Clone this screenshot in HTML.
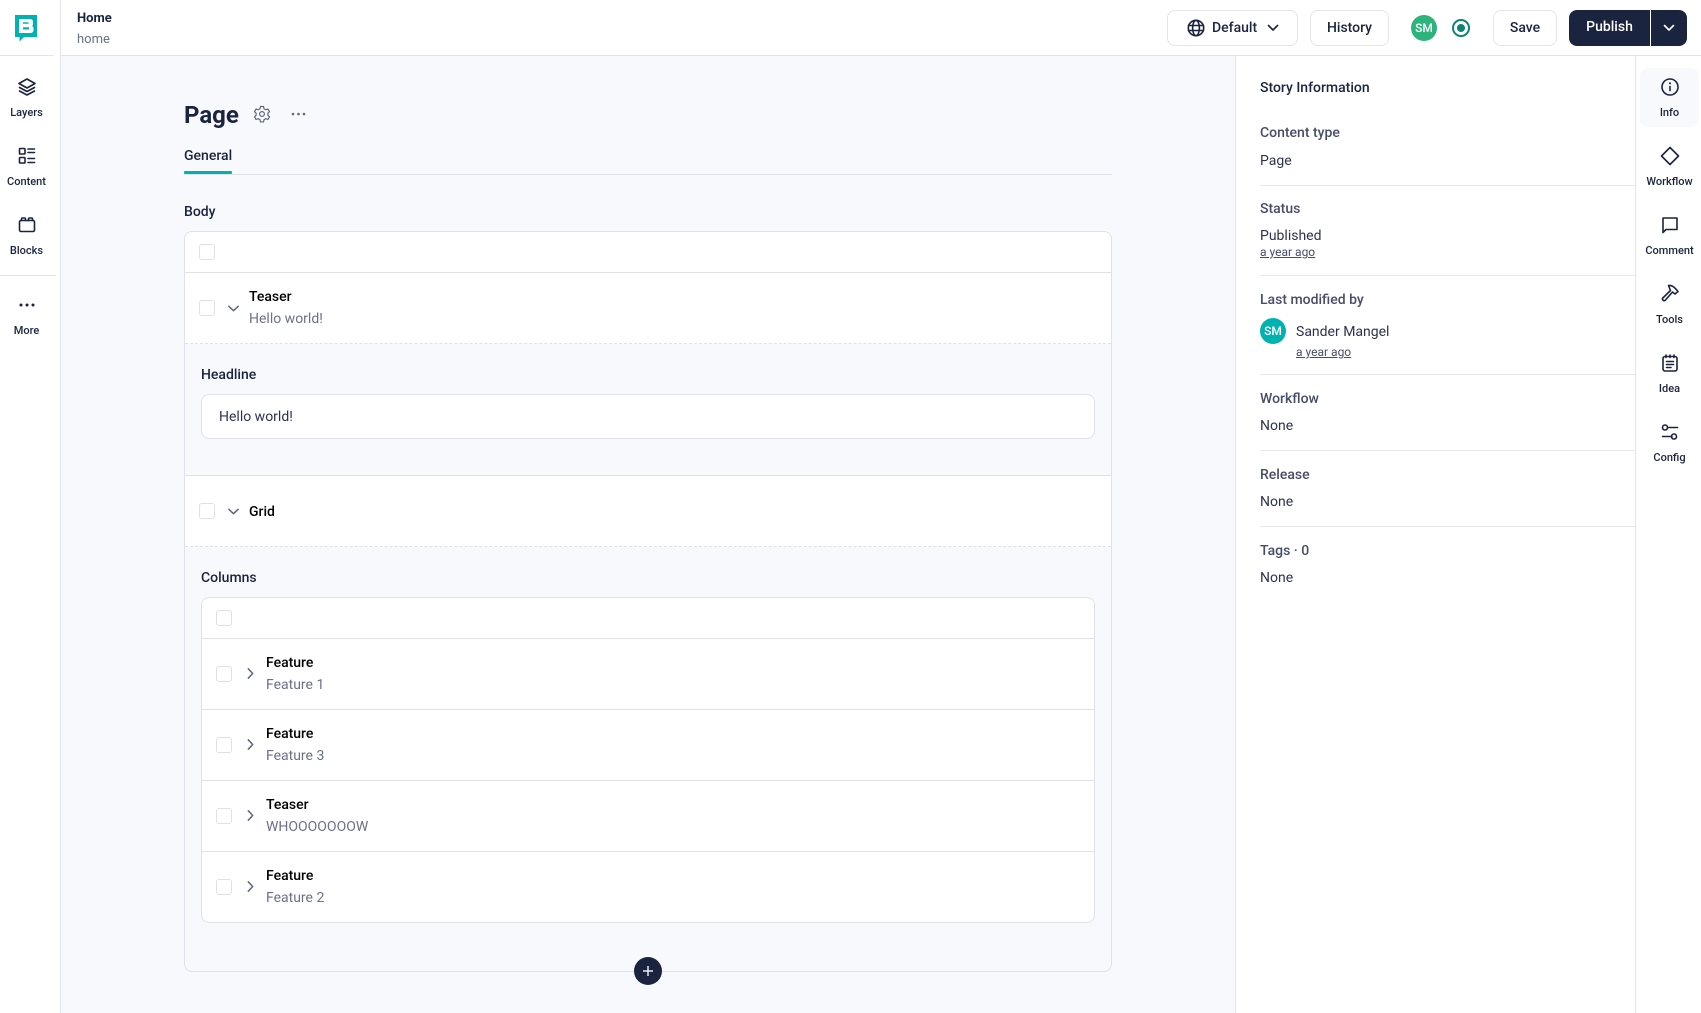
<!DOCTYPE html>
<html lang="en"><head><meta charset="utf-8"><title>Home</title>
<style>
*{box-sizing:border-box}
html,body{margin:0;padding:0;width:1701px;height:1013px;overflow:hidden;background:#fff}
body{font-family:"Roboto","Liberation Sans",sans-serif;color:#1b243f;font-size:14px;position:relative}
.a,.t,svg.i{position:absolute}
.t{line-height:20px;height:20px;white-space:nowrap;margin-top:1px}
.m{font-weight:500}
.lab{font-size:11px;width:66px;text-align:center;color:#1b243f;font-weight:500}
.mut{color:#6a7188}
.sec{color:#454d69;font-weight:500}
.line{position:absolute;background:#e5e7ef;height:1px}
.cb{position:absolute;width:16px;height:16px;border:1px solid #dfe1ea;border-radius:3px;background:#fff}
.btn{position:absolute;top:10px;height:36px;border:1px solid #e3e5ed;border-radius:8px;background:#fff;text-align:center;line-height:34px;font-weight:500}
.u{font-size:12px;text-decoration:underline;color:#454d69;margin-top:0}
svg.i{fill:none;stroke:#1b243f;stroke-width:1.6;stroke-linecap:round;stroke-linejoin:round}
svg.c{stroke:#5f667e;stroke-width:1.5}
.title{color:#000;font-weight:500}
</style></head><body>
<!-- canvas -->
<div class="a" style="left:60px;top:56px;width:1175px;height:957px;background:#f8f9fc"></div>
<!-- structure lines -->
<div class="a" style="left:60px;top:0;width:1px;height:1013px;background:#e3e5ee"></div>
<div class="a" style="left:60px;top:55px;width:1641px;height:1px;background:#e3e5ee"></div>
<div class="a" style="left:0;top:55px;width:54px;height:1px;background:#e3e5ee"></div>
<div class="a" style="left:0;top:275px;width:56px;height:1px;background:#e3e5ee"></div>
<div class="a" style="left:1235px;top:56px;width:1px;height:957px;background:#e3e5ee"></div>
<div class="a" style="left:1635px;top:56px;width:1px;height:957px;background:#e3e5ee"></div>
<!-- logo -->
<svg class="a" style="left:15px;top:15px" width="22" height="27" viewBox="0 0 22 27"><path d="M0 0H22V22H9L4.500 26.500V22H0Z" fill="#00b3b0"/><path fill-rule="evenodd" d="M4 4H15Q18 4 18 7V9Q18 10.500 17 11Q18.500 11.800 18.500 13.500V15Q18.500 18 15 18H4ZM8 7.200V8.800H13.500V7.200ZM8 12.200V14.500H14V12.200Z" fill="#fff"/></svg>
<!-- left rail -->
<svg class="i" style="left:17px;top:77px" width="20" height="20" viewBox="0 0 20 20"><path d="M10 2 18 6.500 10 11 2 6.500Z"/><path d="M2.500 10.500 10 14.500 17.500 10.500"/><path d="M2.500 14 10 18 17.500 14"/></svg>
<div class="t lab" style="left:-6.500px;top:102px">Layers</div>
<svg class="i" style="left:18px;top:147px" width="18" height="18" viewBox="0 0 18 18"><rect x="1.500" y="1.500" width="5.500" height="5.500" rx=".8"/><rect x="1.500" y="10.500" width="5.500" height="5.500" rx=".8"/><path d="M10 2H16.500M10 5.500H16.500M10 11.500H16.500M10 15.500H16.500"/></svg>
<div class="t lab" style="left:-6.500px;top:171px">Content</div>
<svg class="i" style="left:18px;top:216px" width="18" height="18" viewBox="0 0 18 18"><rect x="1.500" y="4.500" width="15" height="11" rx="1.500"/><path d="M3.500 4.500V3Q3.500 2 4.500 2H6.500Q7.500 2 7.500 3V4.500M10.500 4.500V3Q10.500 2 11.500 2H13.500Q14.500 2 14.500 3V4.500"/></svg>
<div class="t lab" style="left:-6.500px;top:240px">Blocks</div>
<svg class="a" style="left:19px;top:303px" width="16" height="4"><circle cx="2" cy="2" r="1.500" fill="#1b243f"/><circle cx="8" cy="2" r="1.500" fill="#1b243f"/><circle cx="14" cy="2" r="1.500" fill="#1b243f"/></svg>
<div class="t lab" style="left:-6.500px;top:320px">More</div>
<!-- top -->
<div class="t" style="left:77px;top:8px;font-size:13px;font-weight:bold">Home</div>
<div class="t mut" style="left:77px;top:29px;font-size:13px">home</div>
<div class="btn" style="left:1167px;width:131px"></div>
<svg class="i" style="left:1187px;top:19px" width="18" height="18" viewBox="0 0 18 18" stroke-width="1.300"><circle cx="9" cy="9" r="7.700"/><ellipse cx="9" cy="9" rx="3.400" ry="7.700"/><path d="M1.500 6.500H16.500M1.500 11.500H16.500"/></svg>
<div class="t m" style="left:1212px;top:17px">Default</div>
<svg class="i" style="left:1267px;top:22px" width="12" height="12" viewBox="0 0 12 12"><path d="M1.500 3.500 6 8 10.500 3.500"/></svg>
<div class="btn" style="left:1310px;width:79px;color:#1b243f">History</div>
<div class="a" style="left:1411px;top:15px;width:26px;height:26px;border-radius:50%;background:#2db47d;color:#fff;text-align:center;line-height:26px;font-size:12px;font-weight:500">SM</div>
<div class="a" style="left:1452px;top:19px;width:18px;height:18px;border-radius:50%;border:2px solid #0b8375"></div>
<div class="a" style="left:1457px;top:24px;width:8px;height:8px;border-radius:50%;background:#0b8375"></div>
<div class="btn" style="left:1493px;width:64px">Save</div>
<div class="a" style="left:1569px;top:10px;width:81px;height:36px;background:#1b243f;border-radius:8px 0 0 8px;color:#fff;text-align:center;line-height:34px;font-weight:500">Publish</div>
<div class="a" style="left:1651px;top:10px;width:36px;height:36px;background:#1b243f;border-radius:0 8px 8px 0"></div>
<svg class="i" style="left:1663px;top:22px;stroke:#fff" width="12" height="12" viewBox="0 0 12 12"><path d="M1.500 3.500 6 8 10.500 3.500"/></svg>
<!-- title -->
<div class="t" style="left:184px;top:103px;font-size:24px;font-weight:bold;line-height:22px">Page</div>
<svg class="i" style="left:253px;top:105px;stroke:#5f667e;stroke-width:1.200" width="18" height="18" viewBox="0 0 24 24" ><path stroke-width="1.600" d="M10 2h4l.7 3 2.300 1.300 3-.9 2 3.500-2.200 2.100v2.600l2.200 2.100-2 3.500-3-.9-2.300 1.300-.7 3h-4l-.7-3-2.300-1.300-3 .9-2-3.500 2.200-2.100v-2.600L2 8.900l2-3.500 3 .9 2.300-1.300z"/><circle cx="12" cy="12" r="3.200" stroke-width="1.600"/></svg>
<svg class="a" style="left:291px;top:112px" width="16" height="4"><circle cx="2" cy="2" r="1.300" fill="#5f667e"/><circle cx="7.500" cy="2" r="1.300" fill="#5f667e"/><circle cx="13" cy="2" r="1.300" fill="#5f667e"/></svg>
<div class="t m" style="left:184px;top:145px">General</div>
<div class="a" style="left:184px;top:174px;width:928px;height:1px;background:#dfe1ea"></div>
<div class="a" style="left:184px;top:171px;width:48px;height:3px;background:#00b3b0;border-radius:1px"></div>
<div class="t sec" style="left:184px;top:201px;color:#1b243f">Body</div>
<!-- outer card -->
<div class="a" style="left:184px;top:231px;width:928px;height:741px;border:1px solid #e0e2eb;border-radius:8px;background:#f8f9fc;overflow:hidden">
 <div class="a" style="left:0;top:0;width:926px;height:112px;background:#fff"></div>
 <div class="a" style="left:0;top:40px;width:926px;height:1px;background:#e0e2eb"></div>
 <div class="a" style="left:0;top:111px;width:926px;border-top:1px dashed #dfe1ea"></div>
 <div class="a" style="left:0;top:243px;width:926px;height:72px;background:#fff"></div>
 <div class="a" style="left:0;top:243px;width:926px;height:1px;background:#e0e2eb"></div>
 <div class="a" style="left:0;top:314px;width:926px;border-top:1px dashed #dfe1ea"></div>
</div>
<div class="cb" style="left:199px;top:244px"></div>
<div class="cb" style="left:199px;top:300px"></div>
<svg class="i c" style="left:226.500px;top:302px" width="13" height="13" viewBox="0 0 13 13"><path d="M1.800 4.300 6.500 8.700 11.200 4.300"/></svg>
<div class="t title" style="left:249px;top:286px">Teaser</div>
<div class="t mut" style="left:249px;top:308px">Hello world!</div>
<div class="t sec" style="left:201px;top:364px;color:#1b243f">Headline</div>
<div class="a" style="left:201px;top:394px;width:894px;height:45px;border:1px solid #e0e2eb;border-radius:8px;background:#fff"></div>
<div class="t" style="left:219px;top:406px;color:#2b3350">Hello world!</div>
<div class="cb" style="left:199px;top:503px"></div>
<svg class="i c" style="left:226.500px;top:505px" width="13" height="13" viewBox="0 0 13 13"><path d="M1.800 4.300 6.500 8.700 11.200 4.300"/></svg>
<div class="t title" style="left:249px;top:501px">Grid</div>
<div class="t sec" style="left:201px;top:567px;color:#1b243f">Columns</div>
<!-- inner card -->
<div class="a" style="left:201px;top:597px;width:894px;height:326px;border:1px solid #e0e2eb;border-radius:8px;background:#fff"></div>
<div class="line" style="left:201px;top:638px;width:894px;background:#e0e2eb"></div>
<div class="line" style="left:201px;top:709px;width:894px;background:#e0e2eb"></div>
<div class="line" style="left:201px;top:780px;width:894px;background:#e0e2eb"></div>
<div class="line" style="left:201px;top:851px;width:894px;background:#e0e2eb"></div>
<div class="cb" style="left:216px;top:610px"></div>
<div class="cb" style="left:216px;top:666px"></div>
<div class="cb" style="left:216px;top:737px"></div>
<div class="cb" style="left:216px;top:808px"></div>
<div class="cb" style="left:216px;top:879px"></div>
<svg class="i c" style="left:243.500px;top:667px" width="13" height="13" viewBox="0 0 13 13"><path d="M4.300 1.800 8.700 6.500 4.300 11.200"/></svg>
<svg class="i c" style="left:243.500px;top:738px" width="13" height="13" viewBox="0 0 13 13"><path d="M4.300 1.800 8.700 6.500 4.300 11.200"/></svg>
<svg class="i c" style="left:243.500px;top:809px" width="13" height="13" viewBox="0 0 13 13"><path d="M4.300 1.800 8.700 6.500 4.300 11.200"/></svg>
<svg class="i c" style="left:243.500px;top:880px" width="13" height="13" viewBox="0 0 13 13"><path d="M4.300 1.800 8.700 6.500 4.300 11.200"/></svg>
<div class="t title" style="left:266px;top:652px">Feature</div><div class="t mut" style="left:266px;top:674px">Feature 1</div>
<div class="t title" style="left:266px;top:723px">Feature</div><div class="t mut" style="left:266px;top:745px">Feature 3</div>
<div class="t title" style="left:266px;top:794px">Teaser</div><div class="t mut" style="left:266px;top:816px">WHOOOOOOOW</div>
<div class="t title" style="left:266px;top:865px">Feature</div><div class="t mut" style="left:266px;top:887px">Feature 2</div>
<div class="a" style="left:634px;top:957px;width:28px;height:28px;border-radius:50%;background:#1b243f"></div>
<svg class="a" style="left:642px;top:965px" width="12" height="12"><path d="M6 1V11M1 6H11" stroke="#e8e9ee" stroke-width="1.500"/></svg>
<!-- info panel -->
<div class="t m" style="left:1260px;top:77px">Story Information</div>
<div class="t sec" style="left:1260px;top:122px">Content type</div>
<div class="t" style="left:1260px;top:150px;color:#2b3350">Page</div>
<div class="line" style="left:1260px;top:185px;width:375px"></div>
<div class="t sec" style="left:1260px;top:198px">Status</div>
<div class="t" style="left:1260px;top:225px;color:#2b3350">Published</div>
<div class="t u" style="left:1260px;top:242px">a year ago</div>
<div class="line" style="left:1260px;top:275px;width:375px"></div>
<div class="t sec" style="left:1260px;top:289px">Last modified by</div>
<div class="a" style="left:1260px;top:318px;width:26px;height:26px;border-radius:50%;background:#00b3b0;color:#fff;text-align:center;line-height:26px;font-size:12px;font-weight:500">SM</div>
<div class="t" style="left:1296px;top:321px;color:#2b3350">Sander Mangel</div>
<div class="t u" style="left:1296px;top:342px">a year ago</div>
<div class="line" style="left:1260px;top:374px;width:375px"></div>
<div class="t sec" style="left:1260px;top:388px">Workflow</div>
<div class="t" style="left:1260px;top:415px;color:#2b3350">None</div>
<div class="line" style="left:1260px;top:450px;width:375px"></div>
<div class="t sec" style="left:1260px;top:464px">Release</div>
<div class="t" style="left:1260px;top:491px;color:#2b3350">None</div>
<div class="line" style="left:1260px;top:526px;width:375px"></div>
<div class="t sec" style="left:1260px;top:540px">Tags · 0</div>
<div class="t" style="left:1260px;top:567px;color:#2b3350">None</div>
<!-- right rail -->
<div class="a" style="left:1640px;top:68px;width:59px;height:59px;border-radius:8px;background:#f8f9fc"></div>
<svg class="i" style="left:1660px;top:77px" width="20" height="20" viewBox="0 0 20 20"><circle cx="10" cy="10" r="8"/><path d="M10 9.500V13.500"/><path d="M10 6.300V6.400" stroke-width="2"/></svg>
<div class="t lab" style="left:1636.500px;top:102px">Info</div>
<svg class="i" style="left:1660px;top:146px" width="20" height="20" viewBox="0 0 20 20"><path d="M10 1.500 18.500 10 10 18.500 1.500 10Z"/></svg>
<div class="t lab" style="left:1636.500px;top:171px">Workflow</div>
<svg class="i" style="left:1661px;top:216px" width="18" height="18" viewBox="0 0 18 18"><path d="M2 2H16V13.500H5L2 16.500Z"/></svg>
<div class="t lab" style="left:1636.500px;top:240px">Comment</div>
<svg class="i" style="left:1660px;top:283px" width="20" height="20" viewBox="0 0 20 20"><path d="M8.500 2.500C11.500 2 14 3.500 18 8.500L15 11 12.500 9 5 17.500Q3.500 18 2.800 17 2 16 2.800 15L10.500 7.500Z"/></svg>
<div class="t lab" style="left:1636.500px;top:309px">Tools</div>
<svg class="i" style="left:1661px;top:354px" width="18" height="18" viewBox="0 0 18 18"><rect x="2" y="2.500" width="14" height="14.500" rx="2"/><path d="M5 1V3.500M9 1V3.500M13 1V3.500M5.500 7.500H12.500M5.500 10.500H12.500M5.500 13.500H10"/></svg>
<div class="t lab" style="left:1636.500px;top:378px">Idea</div>
<svg class="i" style="left:1661px;top:423px" width="18" height="18" viewBox="0 0 18 18"><circle cx="4" cy="4.500" r="2.500"/><path d="M6.500 4.500H16.500M1.500 13.500H11"/><circle cx="13" cy="13.500" r="2.500"/></svg>
<div class="t lab" style="left:1636.500px;top:447px">Config</div>
</body></html>
